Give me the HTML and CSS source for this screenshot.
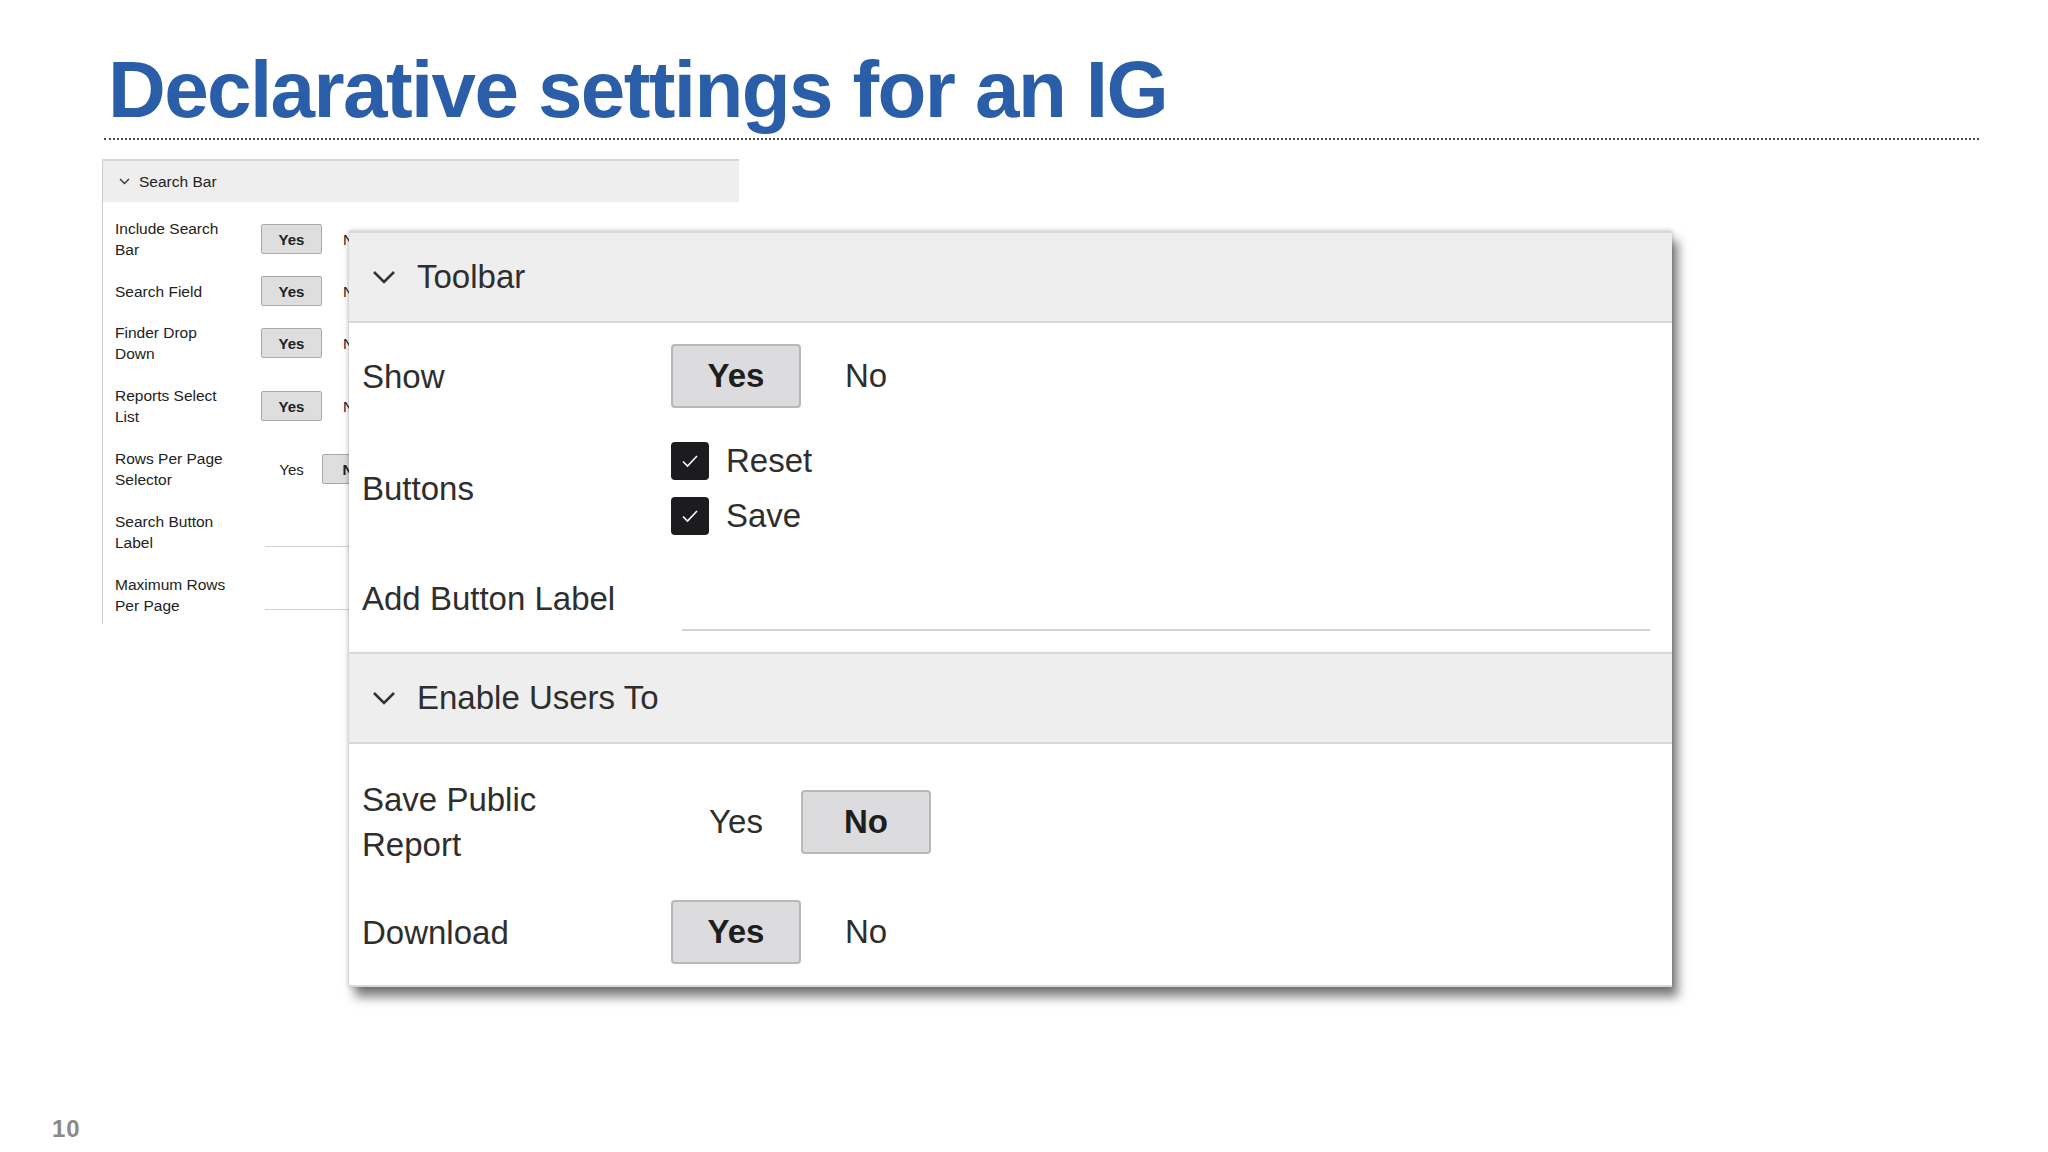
FILE: index.html
```html
<!DOCTYPE html>
<html>
<head>
  <title>Declarative settings for an IG</title>
  <link rel="stylesheet" href="styles.css">
</head>
<body>
  <div class="slide">
    <h1 class="title">Declarative settings for an IG</h1>
    <div class="rule"></div>

    <div class="stage">
      <!-- the small "Search Bar" region behind -->
      <div class="sb-panel">
        <div class="sb-head">
          <svg class="sb-chev" width="11" height="7" viewBox="0 0 11 7"><path d="M1 1 L5.5 5.5 L10 1" fill="none" stroke="#333" stroke-width="1.4"/></svg>
          <span>Search Bar</span>
        </div>
        <div class="sb-body">
          <div class="sb-row">
            <div class="sb-label">Include Search<br>Bar</div>
            <div class="sb-seg"><span class="sb-btn on">Yes</span><span class="sb-btn">No</span></div>
          </div>
          <div class="sb-row">
            <div class="sb-label">Search Field</div>
            <div class="sb-seg"><span class="sb-btn on">Yes</span><span class="sb-btn">No</span></div>
          </div>
          <div class="sb-row">
            <div class="sb-label">Finder Drop<br>Down</div>
            <div class="sb-seg"><span class="sb-btn on">Yes</span><span class="sb-btn">No</span></div>
          </div>
          <div class="sb-row spaced">
            <div class="sb-label">Reports Select<br>List</div>
            <div class="sb-seg"><span class="sb-btn on">Yes</span><span class="sb-btn">No</span></div>
          </div>
          <div class="sb-row spaced">
            <div class="sb-label">Rows Per Page<br>Selector</div>
            <div class="sb-seg"><span class="sb-btn">Yes</span><span class="sb-btn on">No</span></div>
          </div>
          <div class="sb-row spaced">
            <div class="sb-label">Search Button<br>Label</div>
            <div class="sb-input"></div>
          </div>
          <div class="sb-row spaced">
            <div class="sb-label">Maximum Rows<br>Per Page</div>
            <div class="sb-input"></div>
          </div>
        </div>
      </div>

      <!-- zoomed toolbar region laid over it -->
      <div class="tb-panel">
        <div class="tb-head">
          <svg class="tb-chev" width="24" height="14" viewBox="0 0 24 14"><path d="M2 2 L12 12 L22 2" fill="none" stroke="#333" stroke-width="2.6"/></svg>
          <span>Toolbar</span>
        </div>
        <div class="tb-row">
          <div class="tb-label">Show</div>
          <div class="tb-seg"><span class="tb-btn on">Yes</span><span class="tb-btn">No</span></div>
        </div>
        <div class="tb-row row-checks">
          <div class="tb-label">Buttons</div>
          <div class="checks">
            <div class="check">
              <span class="box"><svg width="38" height="38" viewBox="0 0 38 38"><path d="M12 19.5 L16.5 24 L26 14" fill="none" stroke="#fff" stroke-width="1.6"/></svg></span>
              <span>Reset</span>
            </div>
            <div class="check">
              <span class="box"><svg width="38" height="38" viewBox="0 0 38 38"><path d="M12 19.5 L16.5 24 L26 14" fill="none" stroke="#fff" stroke-width="1.6"/></svg></span>
              <span>Save</span>
            </div>
          </div>
        </div>
        <div class="tb-row row-input">
          <div class="tb-label">Add Button Label</div>
          <div class="tb-input"></div>
        </div>
        <div class="tb-head">
          <svg class="tb-chev" width="24" height="14" viewBox="0 0 24 14"><path d="M2 2 L12 12 L22 2" fill="none" stroke="#333" stroke-width="2.6"/></svg>
          <span>Enable Users To</span>
        </div>
        <div class="tb-row row-public">
          <div class="tb-label">Save Public<br>Report</div>
          <div class="tb-seg"><span class="tb-btn">Yes</span><span class="tb-btn on">No</span></div>
        </div>
        <div class="tb-row">
          <div class="tb-label">Download</div>
          <div class="tb-seg"><span class="tb-btn on">Yes</span><span class="tb-btn">No</span></div>
        </div>
      </div>
    </div>

    <div class="page-no">10</div>
  </div>
</body>
</html>
```

FILE: styles.css
```css
html, body {
  margin: 0;
  background: #fff;
}

.slide {
  width: 2048px;
  height: 1152px;
  box-sizing: border-box;
  padding: 44px 0 11px 0;
  display: flex;
  flex-direction: column;
  font-family: "Liberation Sans", Arial, sans-serif;
  overflow: hidden;
}

.title {
  margin: 0 0 0 108px;
  font-size: 80px;
  line-height: 92px;
  letter-spacing: -1.6px;
  font-weight: bold;
  color: #2b5ea8;
}

.rule {
  margin: 2px 0 0 104px;
  width: 1875px;
  border-top: 2px dotted #4a4a4a;
}

.stage {
  position: relative;
  padding-top: 19px;
}

/* ---- small search bar panel ---- */
.sb-panel {
  margin-left: 102px;
  width: 636px;
  border-left: 1px solid #cfcfcf;
  color: #222;
  font-size: 15.5px;
}

.sb-head {
  height: 41px;
  background: #efeeef;
  border-top: 2px solid #d6d6d6;
  display: flex;
  align-items: center;
  gap: 9px;
  padding-left: 16px;
}

.sb-body {
  padding: 11px 0 3px 0;
}

.sb-row {
  display: flex;
  align-items: center;
  height: 52px;
}

.sb-row.spaced {
  margin-top: 11px;
}

.sb-label {
  width: 146px;
  padding-left: 12px;
  line-height: 21px;
}

.sb-seg {
  display: flex;
}

.sb-btn {
  width: 61px;
  height: 30px;
  box-sizing: border-box;
  display: flex;
  align-items: center;
  justify-content: center;
  font-size: 15px;
}

.sb-btn.on {
  background: #dedede;
  border: 1px solid #a9a9a9;
  border-radius: 2px;
  font-weight: bold;
}

.sb-input {
  margin-left: 4px;
  width: 470px;
  height: 28px;
  border-bottom: 1px solid #d2d2d2;
}

/* ---- big toolbar panel ---- */
.tb-panel {
  position: absolute;
  left: 349px;
  top: 91px;
  width: 1323px;
  background: #fff;
  color: #2e2e2e;
  font-size: 33px;
  border-bottom: 2px solid #d9d9d9;
  box-shadow: 0 0 5px rgba(0, 0, 0, 0.25), 6px 10px 10px rgba(0, 0, 0, 0.5);
}

.tb-head {
  height: 88px;
  background: #efeeef;
  border-top: 2px solid #d8d8d8;
  border-bottom: 2px solid #d8d8d8;
  display: flex;
  align-items: center;
  padding-left: 23px;
  gap: 21px;
}

.tb-row {
  display: flex;
  align-items: center;
  padding: 21px 0;
}

.tb-label {
  width: 309px;
  padding-left: 13px;
  line-height: 45px;
}

.tb-seg {
  display: flex;
}

.tb-btn {
  width: 130px;
  height: 64px;
  box-sizing: border-box;
  display: flex;
  align-items: center;
  justify-content: center;
}

.tb-btn.on {
  background: #dcdbdd;
  border: 2px solid #b8b8b8;
  border-radius: 4px;
  font-weight: bold;
  color: #1e1e1e;
}

.row-checks {
  padding: 13px 0 9px 0;
}

.checks {
  display: flex;
  flex-direction: column;
  gap: 17px;
}

.check {
  display: flex;
  align-items: center;
  gap: 17px;
  height: 38px;
}

.box {
  width: 38px;
  height: 38px;
  background: #1c1c1e;
  border-radius: 4px;
  display: flex;
}

.row-input {
  padding: 21.5px 0;
}

.tb-input {
  margin-left: 11px;
  width: 968px;
  height: 63px;
  border-bottom: 2px solid #d4d4d4;
}

.row-public {
  padding: 33px 0 12px 0;
}

.page-no {
  margin-top: auto;
  margin-left: 52px;
  font-size: 24px;
  line-height: 24px;
  font-weight: bold;
  color: #8a8a8a;
  letter-spacing: 1px;
}
```
